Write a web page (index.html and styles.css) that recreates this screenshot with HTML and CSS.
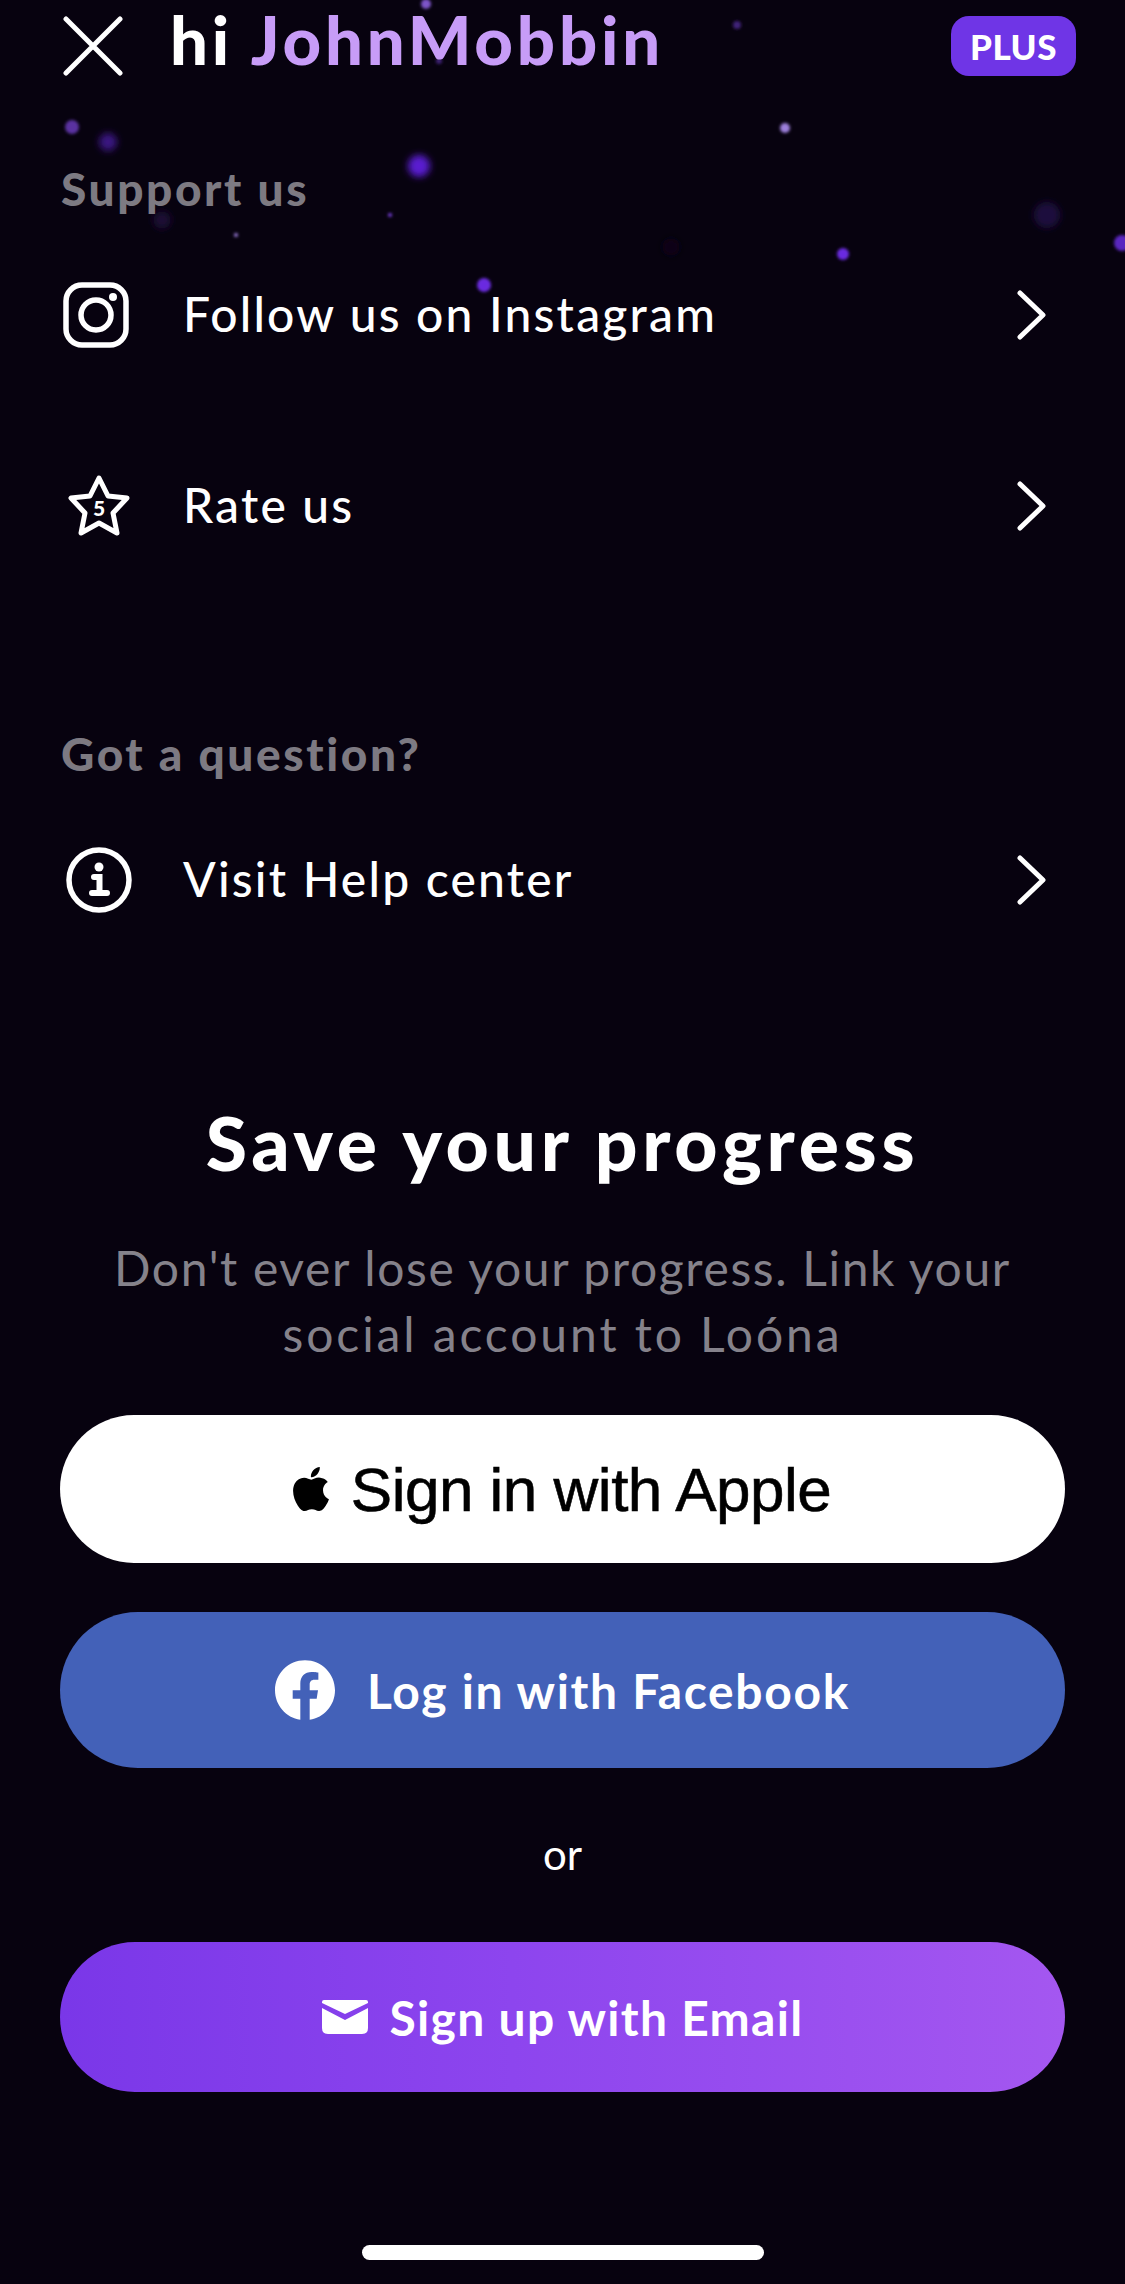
FILE: index.html
```html
<!DOCTYPE html>
<html lang="en">
<head>
    <meta charset="UTF-8">
    <meta name="viewport" content="width=device-width, initial-scale=1.0">
    <title>Settings</title>
    <link rel="stylesheet" href="styles.css">
</head>
<body>
    <div class="screen">
        <!-- floating dots behind the top of the page -->
        <svg class="particles" width="1125" height="320" viewBox="0 0 1125 320">
            <defs>
                <filter id="soft" x="-50%" y="-50%" width="200%" height="200%"><feGaussianBlur stdDeviation="1.5"/></filter>
                <filter id="softer" x="-80%" y="-80%" width="260%" height="260%"><feGaussianBlur stdDeviation="3.5"/></filter>
            </defs>
            <g filter="url(#soft)">
                <circle cx="426" cy="4" r="5" fill="#7d54c8"/>
                <circle cx="737" cy="25" r="4" fill="#3f2478"/>
                <circle cx="439" cy="61" r="3" fill="#3f2478"/>
                <circle cx="72" cy="127" r="7" fill="#5a33a0"/>
                <circle cx="785" cy="128" r="5" fill="#9d80dc"/>
                <circle cx="390" cy="215" r="2" fill="#7a40e0"/>
                <circle cx="236" cy="235" r="2" fill="#a080e0"/>
                <circle cx="843" cy="254" r="6" fill="#6a2be0"/>
                <circle cx="1122" cy="243" r="8" fill="#5a25c0"/>
                <circle cx="484" cy="285" r="7" fill="#6a2be0"/>
            </g>
            <g filter="url(#softer)">
                <circle cx="108" cy="142" r="9" fill="#3a1682"/>
                <circle cx="419" cy="166" r="11" fill="#5a1ed0"/>
                <circle cx="162" cy="220" r="9" fill="#1a0a34"/>
                <circle cx="1047" cy="215" r="13" fill="#1e0f3e"/>
                <circle cx="671" cy="247" r="9" fill="#0a0513"/>
            </g>
        </svg>

        <header class="top-bar">
            <svg class="close-icon" viewBox="0 0 60 60"><path d="M3 3 57 57M57 3 3 57"/></svg>
            <h1 class="greeting">hi <span class="username">JohnMobbin</span></h1>
            <span class="plus-badge">PLUS</span>
        </header>

        <section class="menu-group support">
            <h2 class="group-title">Support us</h2>
            <div class="menu-row">
                <span class="row-icon">
                    <svg class="icon-insta" viewBox="0 0 66 66">
                        <rect x="3" y="3" width="60" height="60" rx="16"/>
                        <circle cx="33" cy="33" r="15"/>
                        <circle class="dot" cx="50" cy="15" r="4"/>
                    </svg>
                </span>
                <span class="row-text">Follow us on Instagram</span>
                <svg class="chevron" viewBox="0 0 30 50"><path d="M3 3 26 25 3 47"/></svg>
            </div>
            <div class="menu-row">
                <span class="row-icon">
                    <svg class="icon-star" viewBox="0 0 64 64">
                        <path d="M32 4 41 22 60 24 46 39 50 59 32 49 14 59 18 39 4 24 23 22Z"/>
                        <text x="32" y="42" text-anchor="middle">5</text>
                    </svg>
                </span>
                <span class="row-text">Rate us</span>
                <svg class="chevron" viewBox="0 0 30 50"><path d="M3 3 26 25 3 47"/></svg>
            </div>
        </section>

        <section class="menu-group question">
            <h2 class="group-title">Got a question?</h2>
            <div class="menu-row">
                <span class="row-icon">
                    <svg class="icon-info" viewBox="0 0 66 66">
                        <circle cx="33" cy="33" r="30"/>
                        <circle class="dot" cx="33" cy="20" r="4.500"/>
                        <path class="stem" d="M28 30H33.500V46M26 46H41"/>
                    </svg>
                </span>
                <span class="row-text">Visit Help center</span>
                <svg class="chevron" viewBox="0 0 30 50"><path d="M3 3 26 25 3 47"/></svg>
            </div>
        </section>

        <section class="save">
            <h2 class="save-title">Save your progress</h2>
            <p class="save-text">Don't ever lose your progress. Link your<br><span class="save-text-end">social account to Loóna</span></p>
            <button class="btn btn-apple">
                <svg class="apple-logo" viewBox="0 0 24 24"><path d="M12.152 6.896c-.948 0-2.415-1.078-3.96-1.04-2.04.027-3.91 1.183-4.961 3.014-2.117 3.675-.546 9.103 1.519 12.09 1.013 1.454 2.208 3.09 3.792 3.039 1.52-.065 2.09-.987 3.935-.987 1.831 0 2.35.987 3.96.948 1.637-.026 2.676-1.48 3.676-2.948 1.156-1.688 1.636-3.325 1.662-3.415-.039-.013-3.182-1.221-3.22-4.857-.026-3.04 2.48-4.494 2.597-4.559-1.429-2.09-3.623-2.324-4.39-2.376-2-.156-3.675 1.09-4.61 1.09zM15.53 3.83c.843-1.012 1.4-2.427 1.245-3.83-1.207.052-2.662.805-3.532 1.818-.78.896-1.454 2.338-1.273 3.714 1.338.104 2.715-.688 3.559-1.701"/></svg>
                Sign in with Apple
            </button>
            <button class="btn btn-facebook">
                <svg class="fb-logo" viewBox="0 0 24 24"><path d="M24 12.073c0-6.627-5.373-12-12-12s-12 5.373-12 12c0 5.99 4.388 10.954 10.125 11.854v-8.385H7.078v-3.47h3.047V9.43c0-3.007 1.792-4.669 4.533-4.669 1.312 0 2.686.235 2.686.235v2.953H15.83c-1.491 0-1.956.925-1.956 1.874v2.25h3.328l-.532 3.47h-2.796v8.385C19.612 23.027 24 18.062 24 12.073z"/></svg>
                Log in with Facebook
            </button>
            <p class="or">or</p>
            <button class="btn btn-email">
                <svg class="mail-icon" viewBox="0 0 46 34"><path d="M2 0H44Q46 0 46 2V3L23 14 0 3V2Q0 0 2 0ZM0 8 23 20 46 8V28Q46 34 40 34H6Q0 34 0 28Z"/></svg>
                Sign up with Email
            </button>
        </section>

        <div class="home-bar"></div>
    </div>
</body>
</html>
```

FILE: styles.css
```css
* {
    box-sizing: border-box;
}

body {
    margin: 0;
    background-color: #07020f;
    font-family: "Lato", "Noto Sans", sans-serif;
    color: #fff;
}

.screen {
    position: relative;
    width: 1125px;
    height: 2284px;
    overflow: hidden;
    background-color: #07020f;
}

.particles {
    position: absolute;
    top: 0;
    left: 0;
}

.top-bar {
    position: relative;
    display: flex;
    align-items: center;
    height: 76px;
    padding: 16px 49px 0 63px;
}

.close-icon {
    width: 60px;
    height: 60px;
    fill: none;
    stroke: #fff;
    stroke-width: 5;
    stroke-linecap: round;
}

.greeting {
    flex: 1;
    margin: -15px 0 0 47px;
    font-size: 67px;
    font-weight: 900;
    line-height: 66px;
    letter-spacing: 3.8px;
}

.username {
    color: #c79cf7;
}

.plus-badge {
    display: flex;
    align-items: center;
    justify-content: center;
    width: 125px;
    height: 60px;
    border-radius: 18px;
    background-color: #6f35e6;
    font-size: 35px;
    font-weight: 900;
    letter-spacing: 0.5px;
}

.menu-group {
    position: relative;
    padding: 0 0 0 61px;
}

.support {
    margin-top: 87px;
}

.question {
    margin-top: 172px;
}

.group-title {
    margin: 0;
    font-size: 46px;
    font-weight: 900;
    line-height: 52px;
    letter-spacing: 2.6px;
    color: #7d7a82;
}

.menu-row {
    display: flex;
    align-items: center;
    height: 100px;
    margin-top: 50px;
    padding-right: 78px;
}

.menu-row + .menu-row {
    margin-top: 91px;
}

.row-icon {
    display: flex;
    width: 122px;
    padding-left: 2px;
}

.row-text {
    flex: 1;
    margin-top: -3px;
    font-size: 48px;
    font-weight: 500;
    letter-spacing: 2.2px;
}

.chevron {
    width: 30px;
    height: 50px;
    fill: none;
    stroke: #fff;
    stroke-width: 5;
    stroke-linecap: round;
    stroke-linejoin: round;
}

.icon-insta,
.icon-star,
.icon-info {
    width: 66px;
    height: 66px;
    fill: none;
    stroke: #fff;
    stroke-width: 5.500;
}

.icon-star {
    width: 64px;
    height: 64px;
    margin-left: 4px;
    stroke-width: 5;
    stroke-linejoin: round;
}

.icon-info {
    margin-left: 3px;
}

.icon-star text {
    fill: #fff;
    stroke: none;
    font-family: "Lato", sans-serif;
    font-size: 21px;
    font-weight: 900;
}

.dot {
    fill: #fff;
    stroke: none;
}

.stem {
    stroke-width: 6;
    stroke-linecap: round;
}

.save {
    display: flex;
    flex-direction: column;
    align-items: center;
    margin-top: 167px;
    padding: 0 60px;
}

.save-title {
    margin: 0;
    font-size: 75px;
    font-weight: 900;
    line-height: 90px;
    letter-spacing: 4.7px;
}

.save-text {
    margin: 48px 0 0;
    font-size: 48px;
    font-weight: 400;
    line-height: 66px;
    letter-spacing: 1.65px;
    text-align: center;
    color: #85828b;
}

.save-text-end {
    letter-spacing: 2.9px;
}

.btn {
    display: flex;
    align-items: center;
    justify-content: center;
    width: 100%;
    border: none;
    border-radius: 80px;
    color: #fff;
    font-family: inherit;
}

.btn-apple {
    height: 148px;
    margin-top: 48px;
    padding-right: 11px;
    background-color: #fff;
    color: #000;
    font-family: "Liberation Sans", Arial, sans-serif;
    font-size: 62px;
    letter-spacing: -0.5px;
    -webkit-text-stroke: 0.6px #000;
}

.apple-logo {
    width: 44px;
    height: 44px;
    margin-right: 18px;
    fill: #000;
}

.btn-facebook {
    height: 156px;
    margin-top: 49px;
    background-color: #4361b8;
    font-size: 48px;
    font-weight: 700;
    letter-spacing: 1.65px;
}

.fb-logo {
    width: 60px;
    height: 60px;
    margin-right: 32px;
    fill: #fff;
}

.or {
    margin: 61px 0 0;
    font-size: 42px;
    line-height: 50px;
}

.btn-email {
    height: 150px;
    margin-top: 63px;
    background: linear-gradient(90deg, #7a37e8 0%, #8d45ee 45%, #a457f0 100%);
    font-size: 48px;
    font-weight: 700;
    letter-spacing: 1.3px;
}

.mail-icon {
    width: 46px;
    height: 34px;
    margin-right: 22px;
    fill: #fff;
}

.home-bar {
    position: absolute;
    left: 362px;
    bottom: 24px;
    width: 402px;
    height: 15px;
    border-radius: 8px;
    background-color: #fff;
}
```
